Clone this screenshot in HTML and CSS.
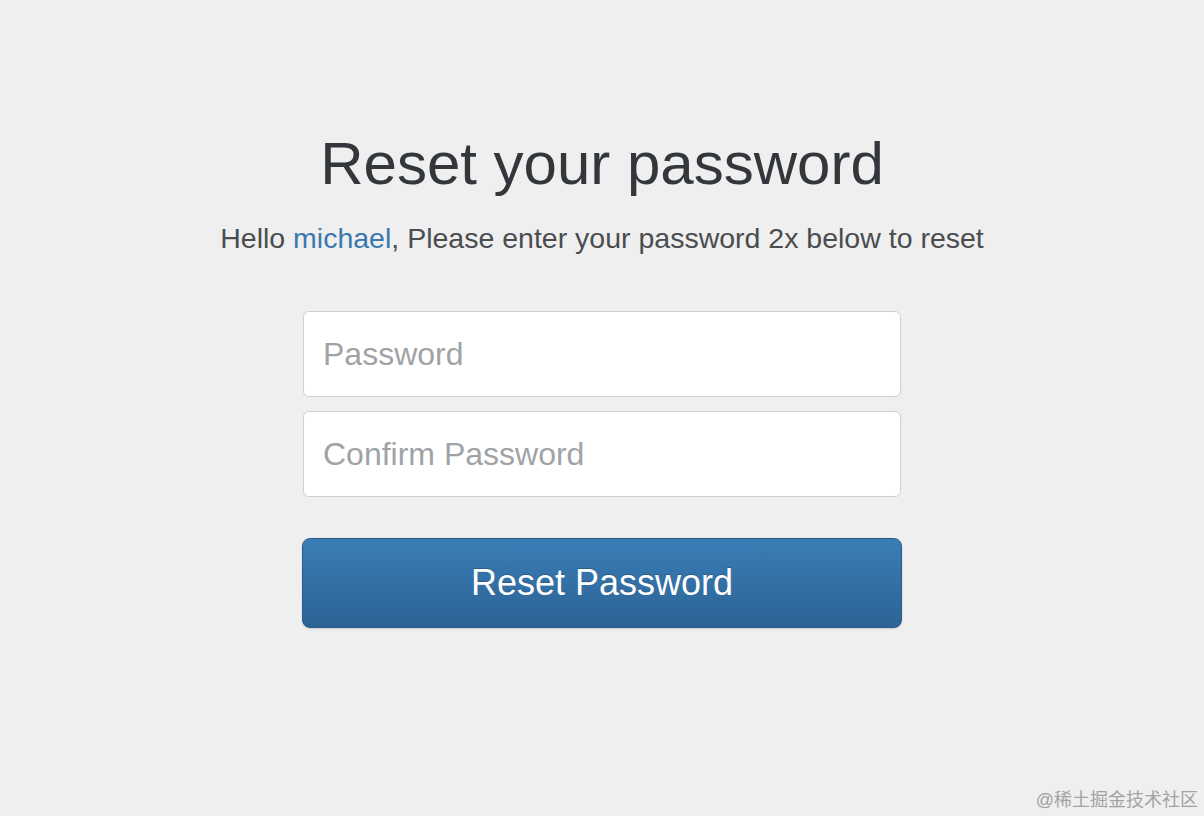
FILE: index.html
```html
<!DOCTYPE html>
<html>
<head>
<meta charset="utf-8">
<link rel="stylesheet" href="styles.css">
</head>
<body>
<main class="page">
  <h1 class="title">Reset your password</h1>
  <p class="subtitle">Hello <a class="user" href="#">michael</a>, Please enter your password 2x below to reset</p>
  <form class="form">
    <input class="field" type="password" placeholder="Password">
    <input class="field" type="password" placeholder="Confirm Password">
    <button class="btn" type="button">Reset Password</button>
  </form>
</main>
<div class="watermark">@稀土掘金技术社区</div>
</body>
</html>
```
FILE: styles.css
```css
html, body {
  margin: 0;
  padding: 0;
}
body {
  background: #efefef;
  width: 1204px;
  height: 816px;
  font-family: "Liberation Sans", Arial, sans-serif;
  position: relative;
  overflow: hidden;
}
.page {
  display: flex;
  flex-direction: column;
  align-items: center;
  padding-top: 130px;
}
.title {
  margin: 0;
  font-size: 60px;
  font-weight: normal;
  color: #33373b;
  line-height: 68px;
}
.subtitle {
  margin: 24px 0 0;
  font-size: 28.5px;
  line-height: 32px;
  color: #4a4d50;
}
.user {
  color: #3a78b0;
  text-decoration: none;
}
.form {
  margin-top: 57px;
  width: 600px;
  display: flex;
  flex-direction: column;
  gap: 14px;
}
.field {
  box-sizing: border-box;
  width: 598px;
  margin-left: 1px;
  height: 86px;
  border: 1px solid #cfcfcf;
  border-radius: 6px;
  background: #fff;
  padding: 0 19px;
  font-family: "Liberation Sans", Arial, sans-serif;
  font-size: 32px;
  color: #333;
  outline: none;
}
.field::placeholder {
  color: #a0a3a6;
}
.btn {
  margin-top: 27px;
  box-sizing: border-box;
  width: 600px;
  height: 90px;
  border: 1px solid #2a5c88;
  border-radius: 8px;
  background: linear-gradient(to bottom, #3a7db6, #2c6395);
  color: #fff;
  font-family: "Liberation Sans", Arial, sans-serif;
  font-size: 36px;
  cursor: pointer;
  text-shadow: 0 -1px 0 rgba(0,0,0,0.2);
  box-shadow: 0 1px 2px rgba(0,0,0,0.15);
}
.watermark {
  position: absolute;
  right: 6px;
  bottom: 5px;
  font-family: "Liberation Sans", "Noto Sans CJK SC", sans-serif;
  font-size: 18px;
  color: #a3a3a3;
}
```
